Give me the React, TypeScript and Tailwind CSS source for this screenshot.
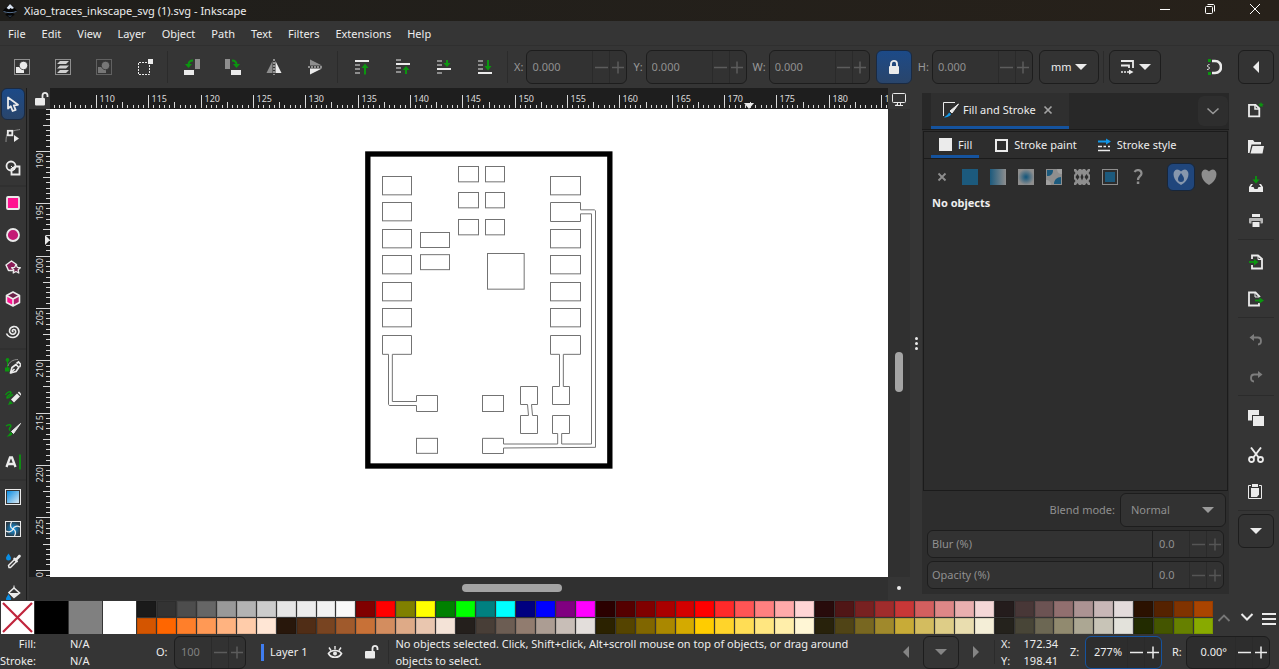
import { useLayoutEffect, useRef, useState } from 'react';
import type { ReactNode } from 'react';

const menus = ['File', 'Edit', 'View', 'Layer', 'Object', 'Path', 'Text', 'Filters', 'Extensions', 'Help'];

const paletteTop = [
  '#1a1a1a', '#333333', '#4d4d4d', '#666666', '#999999', '#b3b3b3', '#cccccc', '#e6e6e6', '#ececec', '#f2f2f2', '#f9f9f9',
  '#800000', '#ff0000', '#808000', '#ffff00', '#008000', '#00ff00', '#008080', '#00ffff', '#000080', '#0000ff', '#800080', '#ff00ff',
  '#2b0000', '#550000', '#800000', '#aa0000', '#d40000', '#ff0000', '#ff2a2a', '#ff5555', '#ff8080', '#ffaaaa', '#ffd5d5',
  '#280b0b', '#501616', '#782121', '#a02c2c', '#c83737', '#d35f5f', '#de8787', '#e9afaf', '#f4d7d7',
  '#241c1c', '#483737', '#6c5353', '#916f6f', '#ac9393', '#c8b7b7', '#e3dbdb',
  '#2b1100', '#552200', '#803300', '#aa4400',
];

const paletteBottom = [
  '#d45500', '#ff6600', '#ff7f2a', '#ff9955', '#ffb380', '#ffccaa', '#ffe6d5',
  '#28170b', '#502d16', '#784421', '#a05a2c', '#c87137', '#d38d5f', '#deaa87', '#e9c6af', '#f4e3d7',
  '#241f1c', '#483e37', '#6c5d53', '#917c6f', '#ac9d93', '#c8beb7', '#e3dedb',
  '#2b2200', '#554400', '#806600', '#aa8800', '#d4aa00', '#ffcc00', '#ffd42a', '#ffdd55', '#ffe680', '#ffeeaa', '#fff6d5',
  '#28220b', '#504416', '#786721', '#a0892c', '#c8ab37', '#d3bc5f', '#decd87', '#e9ddaf', '#f4eed7',
  '#24221c', '#484537', '#6c6753', '#918a6f', '#aca793', '#c8c4b7', '#e3e2db',
  '#222b00', '#445500', '#668000', '#88aa00',
];

const W = '#ebebeb';
const G = '#0b960f';
const DIM = '#8e8e8e';

type Item = { label: string; icon: ReactNode };

function Icon({ children, className = 'size-4' }: { children: ReactNode; className?: string }) {
  return (
    <svg viewBox="0 0 16 16" fill="none" className={`shrink-0 ${className}`} aria-hidden="true">
      {children}
    </svg>
  );
}

function Triangle({ dir, color = W, className = 'size-3' }: { dir: 'down' | 'left' | 'right'; color?: string; className?: string }) {
  const d = dir === 'down' ? 'M0 3H12L6 9Z' : dir === 'left' ? 'M9 0V12L3 6Z' : 'M3 0V12L9 6Z';
  return (
    <svg viewBox="0 0 12 12" className={`pointer-events-none shrink-0 ${className}`} aria-hidden="true">
      <path d={d} fill={color} />
    </svg>
  );
}

/* Top toolbar */

const selectTools: Item[] = [
  {
    label: 'Select all',
    icon: (
      <>
        <rect x=".5" y=".5" width="15" height="15" stroke={W} strokeDasharray="1 1" />
        <rect x="2" y="8" width="8" height="6" fill={W} />
        <circle cx="9.500" cy="6.500" r="4.200" fill={W} stroke="#353535" strokeWidth=".8" />
      </>
    ),
  },
  {
    label: 'Select all in all layers',
    icon: (
      <>
        <rect x=".5" y=".5" width="15" height="15" stroke={W} strokeDasharray="1 1" />
        <path d="M5 2h9l-3 3H2zM5 6.500h9l-3 3H2zM5 11h9l-3 3H2z" fill="#d0d0d0" />
      </>
    ),
  },
  {
    label: 'Deselect',
    icon: (
      <>
        <rect x=".5" y=".5" width="15" height="15" stroke={DIM} strokeDasharray="1 1" />
        <rect x="2" y="8" width="8" height="6" fill="#777" />
        <circle cx="9.500" cy="6.500" r="4.200" fill="#777" stroke="#353535" strokeWidth=".8" />
      </>
    ),
  },
  {
    label: 'Toggle selection box',
    icon: (
      <>
        <path d="M10 3.500H1.500V15M2 15.500H12.500V6" stroke={W} strokeDasharray="2 1" />
        <rect x="11" y="0" width="5" height="5" fill={W} />
      </>
    ),
  },
];

const transformTools: Item[] = [
  {
    label: 'Rotate 90 counter-clockwise',
    icon: (
      <>
        <rect x="11" y="0" width="5" height="10" fill={DIM} />
        <rect x="0" y="11" width="10" height="5" fill={W} />
        <path d="M9 1.500C6 1.500 4.500 3.500 4.500 6" stroke={G} strokeWidth="2" />
        <path d="M1 5h7L4.500 9z" fill={G} />
      </>
    ),
  },
  {
    label: 'Rotate 90 clockwise',
    icon: (
      <>
        <rect x="0" y="0" width="5" height="10" fill={DIM} />
        <rect x="6" y="11" width="10" height="5" fill={W} />
        <path d="M7 1.500C10 1.500 11.500 3.500 11.500 6" stroke={G} strokeWidth="2" />
        <path d="M8 5h7l-3.500 4z" fill={G} />
      </>
    ),
  },
  {
    label: 'Flip horizontal',
    icon: (
      <>
        <path d="M6.500 2V14H0.500z" fill={DIM} />
        <path d="M9.500 2V14H15.500z" fill={W} />
        <path d="M8 0V16" stroke={W} strokeDasharray="2 1" />
      </>
    ),
  },
  {
    label: 'Flip vertical',
    icon: (
      <>
        <path d="M3 0.500V6.500H15z" fill={DIM} />
        <path d="M3 15.500V9.500H15z" fill={W} />
        <path d="M1 8H16" stroke={W} strokeDasharray="2 1" />
      </>
    ),
  },
];

const orderTools: Item[] = [
  {
    label: 'Raise to top',
    icon: (
      <>
        <path d="M1 2H15" stroke={W} strokeWidth="2" />
        <path d="M1 6H6M1 10H6M1 14H6" stroke={DIM} strokeWidth="2" />
        <path d="M11 15.500V8" stroke={G} strokeWidth="2" />
        <path d="M7.500 9L11 4.500L14.500 9z" fill={G} />
      </>
    ),
  },
  {
    label: 'Raise',
    icon: (
      <>
        <path d="M1 5H15" stroke={W} strokeWidth="2" />
        <path d="M1 1H6M1 9H6M1 13H6" stroke={DIM} strokeWidth="2" />
        <path d="M11 15V10" stroke={G} strokeWidth="2" />
        <path d="M7.500 11L11 7L14.500 11z" fill={G} />
      </>
    ),
  },
  {
    label: 'Lower',
    icon: (
      <>
        <path d="M1 10H15" stroke={W} strokeWidth="2" />
        <path d="M1 2H6M1 6H6M1 14H6" stroke={DIM} strokeWidth="2" />
        <path d="M11 1V5" stroke={G} strokeWidth="2" />
        <path d="M7.500 4L11 8L14.500 4z" fill={G} />
      </>
    ),
  },
  {
    label: 'Lower to bottom',
    icon: (
      <>
        <path d="M1 14H15" stroke={W} strokeWidth="2" />
        <path d="M1 2H6M1 6H6M1 10H6" stroke={DIM} strokeWidth="2" />
        <path d="M11 1V8" stroke={G} strokeWidth="2" />
        <path d="M7.500 7L11 11.500L14.500 7z" fill={G} />
      </>
    ),
  },
];

/* Toolbox */

const toolGroups: Item[][] = [
  [
    { label: 'Selector', icon: <path d="M3 1.500V12.500L5.800 10.200L7.600 15L10.600 13.800L8.800 9.300L13 8.800Z" stroke={W} strokeWidth="1.800" strokeLinejoin="round" /> },
    {
      label: 'Node editor',
      icon: (
        <>
          <path d="M1 14C1 8 2 5 4 4M8 3C11 2 13 2 15 1.500" stroke={DIM} />
          <rect x="2.800" y="2.800" width="4.500" height="4.500" stroke={W} strokeWidth="1.800" />
          <path d="M9 7v7l5-3.500z" fill={W} />
        </>
      ),
    },
    {
      label: 'Shape builder',
      icon: (
        <>
          <circle cx="6" cy="6" r="4.500" stroke={W} strokeWidth="1.800" />
          <path d="M6.500 11.500V14.500H14.500V6.500H10.500L6.500 9Z" stroke={W} strokeWidth="1.800" />
          <path d="M6 6l4 4" stroke={W} />
        </>
      ),
    },
  ],
  [
    { label: 'Rectangle', icon: <rect x="2" y="2" width="12" height="12" rx="1" fill="#ff1391" stroke={W} strokeWidth="1.800" /> },
    { label: 'Ellipse', icon: <circle cx="8" cy="8" r="6" fill="#c41a75" stroke={W} strokeWidth="1.800" /> },
    {
      label: 'Star and polygon',
      icon: (
        <>
          <path d="M6.500 2L11.500 5.500L9.500 11.500H3.500L1 6Z" fill="#8d1b58" stroke={W} strokeWidth="1.500" strokeLinejoin="round" />
          <path d="M11 5.500L12.300 8.300L15.300 8.700L13.200 10.800L13.800 14L11 12.500L8.200 14L8.800 10.800L6.700 8.700L9.700 8.300Z" fill="#6b2148" stroke={W} strokeWidth="1.300" strokeLinejoin="round" />
        </>
      ),
    },
    {
      label: '3D box',
      icon: (
        <>
          <path d="M8 1L14.500 4.500V11.500L8 15L1.500 11.500V4.500Z" fill="#6b2148" />
          <path d="M1.500 4.500L8 8V15L1.500 11.500Z" fill="#ff1391" />
          <path d="M8 8L14.500 4.500V11.500L8 15Z" fill="#b01c6b" />
          <path d="M8 1L14.500 4.500V11.500L8 15L1.500 11.500V4.500ZM1.500 4.500L8 8L14.500 4.500M8 8V15" stroke={W} strokeWidth="1.600" strokeLinejoin="round" />
        </>
      ),
    },
    {
      label: 'Spiral',
      icon: <path d="M8.500 8.500C7 8.800 6.800 6.800 8.500 6.500C11 6.200 11.500 9.500 9.500 10.700C6.500 12.300 3.800 9.500 4.600 6.700C5.800 3 11 2.500 13 5.500C15.500 9.500 12.500 14.300 8 14.500C5 14.500 2.500 12.800 1.500 10.500" stroke={W} strokeWidth="1.600" />,
    },
  ],
  [
    {
      label: 'Pen',
      icon: (
        <>
          <path d="M2.500 12V3" stroke={G} />
          <circle cx="2.500" cy="2" r="1.900" fill={G} />
          <rect x="0" y="9.500" width="4.500" height="4" fill={G} />
          <path d="M3 8C4 4 8 1.500 13 1.500" stroke={DIM} />
          <path d="M5.500 15L7 9.500L11 6.500L13.800 9.500L11 13.500Z" stroke={W} strokeWidth="1.700" strokeLinejoin="round" />
          <path d="M5.500 15L9.500 11M11.500 5.500L13.500 4L16 6.800L14.500 9" stroke={W} strokeWidth="1.700" />
        </>
      ),
    },
    {
      label: 'Pencil',
      icon: (
        <>
          <path d="M0.500 5C2 2 5 1 6 2.500C6.500 5 1 5.500 2 8C4 8.500 6 5 8 4.500" stroke={G} strokeWidth="1.400" />
          <path d="M6 9.500L12 3.500L15 6.500L9 12.500Z" fill={W} />
          <path d="M12.800 2.700L14 1.500L16 3.500V5.700Z" fill={W} />
          <path d="M5 10.500L8 13.500L3 15Z" fill={G} />
        </>
      ),
    },
    {
      label: 'Calligraphy',
      icon: (
        <>
          <path d="M1 4C4 1.500 7 3 5.500 5C4 6.500 4 8 5.500 8.500" stroke={G} strokeWidth="1.500" />
          <path d="M1.500 14.500C4 15 7 13.500 7.500 11.500L5.500 10C4 12 3 13.500 1.500 14.500Z" fill={G} />
          <path d="M15.500 1.500L6.500 9.500L8.500 11.500Z" fill={W} stroke={W} />
        </>
      ),
    },
    {
      label: 'Text',
      icon: (
        <>
          <path d="M1.500 13L5 3.500H7L10.500 13M3.500 10H8.500" stroke={W} strokeWidth="2.300" />
          <path d="M15 0.500V15.500" stroke={G} strokeWidth="1.800" />
        </>
      ),
    },
  ],
  [
    {
      label: 'Gradient',
      icon: (
        <>
          <defs>
            <linearGradient id="tool-gradient" x1="0" y1="0" x2="1" y2="1">
              <stop offset="0" stopColor="#0a8ee4" />
              <stop offset=".9" stopColor="#c5dff0" />
            </linearGradient>
          </defs>
          <rect x=".5" y=".5" width="15" height="15" stroke={W} />
          <rect x="2" y="2" width="12" height="12" fill="url(#tool-gradient)" />
        </>
      ),
    },
    {
      label: 'Mesh gradient',
      icon: (
        <>
          <defs>
            <radialGradient id="tool-mesh">
              <stop offset="0" stopColor="#0a9cf5" />
              <stop offset="1" stopColor="#2b3d49" />
            </radialGradient>
          </defs>
          <rect x=".5" y=".5" width="15" height="15" stroke={W} fill="url(#tool-mesh)" />
          <path d="M8 8C5 7 5 3.500 6.500 1M8 8C9 5 12.500 4.500 15 6M8 8C11 9 11 12.500 9.500 15M8 8C7 11 3.500 11.500 1 10" stroke={W} strokeWidth="1.300" />
        </>
      ),
    },
    {
      label: 'Dropper',
      icon: (
        <>
          <path d="M3.500 0.500C5 3 6 4 6 5.300A2.500 2.300 0 0 1 1 5.300C1 4 2 3 3.500 0.500Z" fill="#0a8ee4" />
          <path d="M4 14.500L3.500 12.500L9.500 6.500L11.500 8.500L5.500 14.500Z" stroke={W} strokeWidth="1.400" />
          <path d="M9 4.500L11 5L13.500 2C15 1 16.500 2.500 15.500 4L12.500 7L13 9L11.500 9.500L8 6Z" fill={W} />
        </>
      ),
    },
    {
      label: 'Paint bucket',
      icon: (
        <>
          <path d="M9 3L14.500 8L9 12.500L4 7.500Z" stroke={W} strokeWidth="1.600" />
          <path d="M3.500 8H14L9 12.500Z" fill={W} />
          <path d="M9 0.500V4" stroke={W} />
          <path d="M3.500 9C5 11.500 6 12.500 6 14A2.500 2 0 0 1 1 14C1 12.500 2 11.500 3.500 9Z" fill="#0a8ee4" />
        </>
      ),
    },
  ],
];

/* Commands bar */

const commandGroups: Item[][] = [
  [
    {
      label: 'New document',
      icon: (
        <>
          <path d="M1 2.800H7.500L11.300 6.500V14.300H1Z" stroke={W} strokeWidth="1.800" />
          <path d="M7 2.500V7H11.500" stroke={W} strokeWidth="1.500" />
          <path d="M13 0L13.800 1.700L15.800 1.900L14.400 3.200L14.800 5L13 4.200L11.200 5L11.600 3.200L10.200 1.900L12.200 1.700Z" fill={G} />
        </>
      ),
    },
    {
      label: 'Open',
      icon: (
        <>
          <path d="M0 14V1H5L6.500 3H13V5.500H3.500L1.500 14Z" fill={W} />
          <path d="M4.500 7H16L14.500 14.500H2.500Z" fill={W} />
        </>
      ),
    },
    {
      label: 'Save',
      icon: (
        <>
          <path d="M8 0V4" stroke={G} strokeWidth="1.800" />
          <path d="M4.500 3.500H11.500L8 7.500Z" fill={G} />
          <path d="M3 8H5L3 11H5.500L6.500 13H9.500L10.500 11H13L11 8H13L15 11V16H1V11Z" fill={W} />
        </>
      ),
    },
    {
      label: 'Print',
      icon: (
        <>
          <rect x="4" y="1" width="8" height="3" fill={W} />
          <rect x="1" y="5" width="14" height="5.500" rx="1" fill="#b5b5b5" />
          <rect x="4" y="8.500" width="8" height="6" fill={W} stroke="#353535" />
        </>
      ),
    },
  ],
  [
    {
      label: 'Import',
      icon: (
        <>
          <path d="M4 5V1.500H10L14 5V14.500H4V11" stroke={W} strokeWidth="1.800" />
          <path d="M10 1V5.500H14" stroke={W} />
          <path d="M1 8H7" stroke={G} strokeWidth="1.800" />
          <path d="M6 5L10.500 8L6 11.500Z" fill={G} />
        </>
      ),
    },
    {
      label: 'Export',
      icon: (
        <>
          <path d="M11 12V14.500H1V1.500H7.500L11.500 5.500V6" stroke={W} strokeWidth="1.800" />
          <path d="M7 1V6H11.500" stroke={W} />
          <path d="M7 9.500H13" stroke={G} strokeWidth="1.800" />
          <path d="M11.500 6.500L16 9.500L11.500 12.500Z" fill={G} />
        </>
      ),
    },
  ],
  [
    {
      label: 'Undo',
      icon: (
        <>
          <path d="M6 2V9L1.500 5.500Z" fill="#7d7d7d" />
          <path d="M5 5.500H10C14 5.500 14 12.500 10 12.500" stroke="#7d7d7d" strokeWidth="1.800" />
        </>
      ),
    },
    {
      label: 'Redo',
      icon: (
        <>
          <path d="M10 2V9L14.500 5.500Z" fill="#7d7d7d" />
          <path d="M11 5.500H6C2 5.500 2 12.500 6 12.500" stroke="#7d7d7d" strokeWidth="1.800" />
        </>
      ),
    },
  ],
  [
    {
      label: 'Duplicate',
      icon: (
        <>
          <rect x="0" y="0" width="11" height="10.500" fill={W} />
          <rect x="4.500" y="5.500" width="12" height="11" fill={W} stroke="#353535" />
        </>
      ),
    },
    {
      label: 'Cut',
      icon: (
        <>
          <path d="M3 0.500L11 11M13 0.500L5 11" stroke={W} strokeWidth="1.900" />
          <circle cx="3.500" cy="12.500" r="2.500" stroke={W} strokeWidth="1.800" />
          <circle cx="12.500" cy="12.500" r="2.500" stroke={W} strokeWidth="1.800" />
        </>
      ),
    },
    {
      label: 'Paste',
      icon: (
        <>
          <path d="M3 1.500H0.500V14.500H13.500V1.500H11" stroke={W} />
          <path d="M4 3V0H10V3Z" fill={W} />
          <path d="M3 4H11V10.500L9 13H3Z" fill={W} />
        </>
      ),
    },
  ],
];

function ToolbarGroup({ items }: { items: Item[] }) {
  return (
    <div className="flex">
      {items.map((item) => (
        <button key={item.label} aria-label={item.label} className="flex h-8 w-[41px] items-center justify-center">
          <Icon>{item.icon}</Icon>
        </button>
      ))}
    </div>
  );
}

function VSep() {
  return <div className="mr-[3px] ml-0.5 h-8 w-px shrink-0 bg-[#2b2b2b]" />;
}

function StepButtons({ color }: { color: string }) {
  return (
    <>
      <button aria-label="Decrease" className="flex w-[17px] shrink-0 items-center justify-center border-l border-[#2a2a2a]">
        <svg viewBox="0 0 13 13" className="size-[13px]" aria-hidden="true">
          <path d="M0 6.500H13" stroke={color} strokeWidth="1.500" />
        </svg>
      </button>
      <button aria-label="Increase" className="flex w-[17px] shrink-0 items-center justify-center border-l border-[#2a2a2a]">
        <svg viewBox="0 0 13 13" className="size-[13px]" aria-hidden="true">
          <path d="M0 6.500H12M6 0.500V12.500" stroke={color} strokeWidth="1.500" />
        </svg>
      </button>
    </>
  );
}

function ToolbarSpin({ id, label }: { id: string; label: string }) {
  return (
    <div className="flex items-center gap-[3px]">
      <label htmlFor={id} className="text-[#999]">{label}</label>
      <div className="flex h-[34px] w-[101px] overflow-hidden rounded-md border border-[#1d1d1d] bg-[#323232]">
        <input id={id} defaultValue="0.000" className="min-w-0 flex-1 bg-transparent pl-[5px] text-[#909090] outline-none" />
        <StepButtons color="#5c5c5c" />
      </div>
    </div>
  );
}

function PanelSpin({ id, label }: { id: string; label: string }) {
  return (
    <div className="flex h-7 overflow-hidden rounded-md border border-[#1d1d1d] bg-[#323232] text-[#909090]">
      <label htmlFor={id} className="flex flex-1 items-center border-r border-[#1d1d1d] pl-1">{label}</label>
      <input id={id} defaultValue="0.0" className="w-9 bg-transparent pl-1.5 outline-none" />
      <StepButtons color="#555555" />
    </div>
  );
}

/* Rulers: one division is half a millimetre */

const PX_PER_MM = 10.47;

function ticks(first: number, firstAt: number, length: number) {
  const list = [];
  for (let v = first; firstAt + (v - first) * PX_PER_MM < length; v += 0.5) {
    list.push({ value: v, at: Math.round(firstAt + (v - first) * PX_PER_MM) + 0.5, major: v % 5 === 0, mid: v % 5 === 2.5 });
  }
  return list;
}

function useSize() {
  const ref = useRef<HTMLDivElement>(null);
  const [size, setSize] = useState({ width: 0, height: 0 });
  useLayoutEffect(() => {
    const el = ref.current;
    if (!el) return;
    const measure = () => setSize({ width: el.clientWidth, height: el.clientHeight });
    measure();
    const observer = new ResizeObserver(measure);
    observer.observe(el);
    return () => observer.disconnect();
  }, []);
  return { ref, ...size };
}

function HorizontalRuler() {
  const { ref, width } = useSize();
  return (
    <div ref={ref} className="min-w-0 overflow-hidden bg-[#1e1e1e]">
      <svg className="h-full w-full text-[9px]" aria-hidden="true">
        {ticks(106, 4, width).map((t) => (
          <g key={t.value}>
            <path d={`M${t.at} ${t.major ? 7 : t.mid ? 14 : 17}V20`} stroke="#d8d8d8" />
            {t.major && <text x={t.at + 3} y="14" fill="#dcdcdc">{t.value}</text>}
          </g>
        ))}
        <path d="M694 15H704L699 21Z" fill={W} />
      </svg>
    </div>
  );
}

function VerticalRuler() {
  const { ref, height } = useSize();
  return (
    <div ref={ref} className="min-h-0 overflow-hidden bg-[#1e1e1e]">
      <svg className="h-full w-full text-[9px]" aria-hidden="true">
        {ticks(186, 0, height).map((t) => (
          <g key={t.value}>
            <path d={`M${t.major ? 7 : t.mid ? 14 : 17} ${t.at}H21`} stroke="#d8d8d8" />
            {t.major && (
              <text transform={`translate(14 ${t.at + 17}) rotate(-90)`} fill="#dcdcdc">{t.value}</text>
            )}
          </g>
        ))}
        <path d="M16 126V136L21 131Z" fill={W} />
      </svg>
    </div>
  );
}

/* Board drawing, three units to a screen pixel */

const padRows = [94.5, 172.5, 253.5, 331.5, 412.5, 490.5];

function Board() {
  return (
    <svg viewBox="0 0 780 990" className="absolute top-9 left-[310px] h-[330px] w-[260px]" role="img" aria-label="Circuit board traces">
      <rect x="23.500" y="27" width="726" height="936" fill="#fff" stroke="#000" strokeWidth="16" />
      <g fill="none" stroke="#737373" strokeWidth="3">
        {padRows.map((y) => (
          <rect key={y} x="67.500" y={y} width="87" height="55" />
        ))}
        {padRows.filter((_, i) => i !== 1).map((y) => (
          <rect key={y} x="571.500" y={y} width="90" height="55" />
        ))}
        {[64.5, 142.5, 223.5].map((y) => (
          <g key={y}>
            <rect x="295.500" y={y} width="60" height="46" />
            <rect x="376.500" y={y} width="57" height="46" />
          </g>
        ))}
        <rect x="181.500" y="262.500" width="87" height="45" />
        <rect x="181.500" y="329" width="87" height="45" />
        <rect x="382.500" y="325.500" width="110" height="107" />
        <rect x="367.500" y="751.500" width="63" height="48" />
        <rect x="169.500" y="880" width="63" height="45" />
        <path d="M85.500 628H67.500V571.500H154.500V628H97V769.500H169.500V751.500H232.500V799.500H169.500V781.500H88L85.500 778Z" />
        <path d="M598.500 628H571.500V571.500H661.500V628H610V724.500H628.500V778.500H577.500V724.500H598.500Z" />
        <path d="M505.500 811.500H481.500V865.500H532.500V811.500H517.500L514.500 778.500H532.500V724.500H481.500V778.500H502.500Z" />
        <path d="M661.500 194.500V172.500H571.500V229.500H661.500V206.500H694.500V897H605V865.500H628.500V811.500H577.500V865.500H593V897H430.500V880H367.500V925.500H430.500V909L706.500 907V197L703 194.500Z" />
      </g>
    </svg>
  );
}

function DrawingArea() {
  return (
    <section className="grid min-w-0 flex-1 grid-cols-[21px_1fr_22px] grid-rows-[21px_1fr_23px] bg-[#303030]">
      <button aria-label="Lock guides" className="flex items-center justify-center bg-[#353535] pl-1">
        <OpenLock />
      </button>
      <HorizontalRuler />
      <button aria-label="Display mode" className="flex items-center justify-center bg-[#353535]">
        <Icon>
          <rect x="1.500" y="2.500" width="13" height="9" rx="1" stroke={W} />
          <path d="M6.500 12V14H4.500M4 14.500H12M9.500 12V14" stroke={W} />
        </Icon>
      </button>
      <VerticalRuler />
      <div className="relative min-h-0 overflow-hidden bg-white">
        <Board />
      </div>
      <div className="flex justify-center pt-[243px]">
        <div className="h-10 w-2 rounded-full bg-[#a4a4a4]" />
      </div>
      <div />
      <div className="flex items-center pb-px pl-[412px]">
        <div className="h-2 w-[100px] rounded-full bg-[#a4a4a4]" />
      </div>
      <div className="flex items-center justify-center bg-[#353535] pb-px">
        <div className="size-1 rounded-full bg-[#ebebeb]" />
      </div>
    </section>
  );
}

function OpenLock() {
  return (
    <Icon>
      <rect x="1" y="7" width="10" height="7.500" rx="1" fill={W} />
      <path d="M8.500 8V4.500C8.500 1 13.500 1 13.500 4.500V6" stroke={W} strokeWidth="1.800" />
    </Icon>
  );
}

/* Fill and Stroke dialog */

const paintKinds: Item[] = [
  { label: 'No paint', icon: <path d="M4.500 4.500L11.500 11.500M11.500 4.500L4.500 11.500" stroke={DIM} strokeWidth="1.800" /> },
  { label: 'Flat color', icon: <rect width="16" height="16" fill="#1c5a7d" /> },
  { label: 'Linear gradient', icon: <rect width="16" height="16" fill="url(#paint-linear)" /> },
  { label: 'Radial gradient', icon: <rect width="16" height="16" fill="url(#paint-radial)" /> },
  {
    label: 'Mesh gradient',
    icon: (
      <>
        <rect width="16" height="16" fill={DIM} />
        <path d="M1 1H7C7 5 5 7 1 7ZM15 15H8C8 11 11 8 15 8Z" fill="#1c5a7d" />
        <path d="M11 0H16V5C13 5 11 3 11 0ZM0 11C3 11 5 13 5 16H0Z" fill="#a0a0a0" />
      </>
    ),
  },
  {
    label: 'Pattern',
    icon: (
      <path
        d="M0 0H2L3.500 2L5 0H7L8 1L9 0H11L12.500 2L14 0H16V2L14.500 4L16 6V10L14.500 12L16 14V16H14L12.500 14L11 16H9L8 15L7 16H5L3.500 14L2 16H0V14L1.500 12L0 10V6L1.500 4L0 2ZM3.500 5L1.500 8L3.500 11L5.500 8ZM8 4.500L6.500 8L8 11.500L9.500 8ZM12.500 5L10.500 8L12.500 11L14.500 8Z"
        fill={DIM}
        fillRule="evenodd"
      />
    ),
  },
  {
    label: 'Swatch',
    icon: (
      <>
        <rect x=".5" y=".5" width="15" height="15" stroke={DIM} />
        <rect x="3" y="3" width="10" height="10" fill="#1c5a7d" />
      </>
    ),
  },
  {
    label: 'Unset paint',
    icon: (
      <>
        <path d="M4.500 3C6.500 0 11.500 0.500 11.500 4.500C11.500 7 8 7.500 8 11" stroke={DIM} strokeWidth="2.200" />
        <rect x="6.800" y="12.500" width="2.500" height="2.500" fill={DIM} />
      </>
    ),
  },
];

function FillAndStroke() {
  return (
    <aside className="mt-[5px] mb-1.5 flex w-[307px] shrink-0 flex-col bg-[#2d2d2d]">
      <svg className="absolute size-0" aria-hidden="true">
        <linearGradient id="paint-linear">
          <stop offset="0" stopColor="#1c5a7d" />
          <stop offset="1" stopColor="#8e8e8e" />
        </linearGradient>
        <radialGradient id="paint-radial">
          <stop offset=".1" stopColor="#1c5a7d" />
          <stop offset="1" stopColor="#8e8e8e" />
        </radialGradient>
      </svg>
      <header className="flex h-[37px] items-stretch border-b border-[#1b1b1b] bg-[#282828] pr-px pl-[9px]">
        <div className="flex w-[138px] items-center border-b-3 border-[#15539e] bg-[#2f2f2f] pl-3">
          <Icon>
            <path d="M12 0.500H0.500V14" stroke={W} />
            <path d="M15.500 2L7 9L9 11Z" fill={W} stroke={W} />
            <path d="M1 15.500C4 15.500 7.500 14 8 12L6 10.500C5 12.500 3 14 1 15.500Z" fill="#1197e8" />
          </Icon>
          <span className="ml-1">Fill and Stroke</span>
          <button aria-label="Close Fill and Stroke" className="ml-1">
            <Icon>
              <path d="M4.500 4.500L11.500 11.500M11.500 4.500L4.500 11.500" stroke="#a2a2a2" strokeWidth="1.700" />
            </Icon>
          </button>
        </div>
        <button aria-label="Dialog menu" className="my-[3px] ml-auto flex w-[30px] items-center justify-center rounded-md bg-[#2e2e2e]">
          <Icon>
            <path d="M2.500 5.500L8 10.500L13.500 5.500" stroke="#999" strokeWidth="1.600" />
          </Icon>
        </button>
      </header>
      <div className="mx-px mt-px flex flex-1 flex-col border border-[#1b1b1b]">
        <div role="tablist" className="flex h-[27px] items-stretch gap-3 border-b border-[#1b1b1b] pl-[7px]">
          <button role="tab" aria-selected="true" className="flex items-center border-b-3 border-[#15539e] pt-0.5 pr-[7px] pl-2">
            <span className="mr-1.5 size-[13px] bg-[#ebebeb]" />
            Fill
          </button>
          <button role="tab" aria-selected="false" className="flex items-center pl-1">
            <span className="mr-1.5 size-[13px] border-2 border-[#ebebeb]" />
            Stroke paint
          </button>
          <button role="tab" aria-selected="false" className="flex items-center pl-2">
            <Icon className="mr-1 size-4">
              <path d="M1 4.500H10" stroke="#1197e8" strokeWidth="2" />
              <path d="M9 1.500L14 4.500L9 7.500Z" fill="#1197e8" />
              <path d="M1 9.500H5M6.500 9.500H9M11 9.500H13M1 13.500H13" stroke={W} strokeWidth="1.500" />
            </Icon>
            Stroke style
          </button>
        </div>
        <div className="flex items-center pt-1 pl-1">
          {paintKinds.map((kind) => (
            <button key={kind.label} aria-label={kind.label} className="flex size-7 shrink-0 items-center justify-center">
              <Icon>{kind.icon}</Icon>
            </button>
          ))}
          <button aria-label="Fill rule even-odd" className="ml-[15px] flex size-7 shrink-0 items-center justify-center rounded-md border border-[#17263a] bg-[#20467c]">
            <Icon>
              <path d="M4 0.500C6 0.500 7 1.500 8 2.500C9 1.500 10 0.500 12 0.500C17 1.500 16.500 9 11 14L8 16L5 14C-0.500 9 -1 1.500 4 0.500ZM8 4C6 7 5 8 5 10A3 3 0 0 0 11 10C11 8 10 7 8 4Z" fill="#8797ad" fillRule="evenodd" />
            </Icon>
          </button>
          <button aria-label="Fill rule nonzero" className="flex size-7 shrink-0 items-center justify-center">
            <Icon>
              <path d="M4 0.500C6 0.500 7 1.500 8 2.500C9 1.500 10 0.500 12 0.500C17 1.500 16.500 9 11 14L8 16L5 14C-0.500 9 -1 1.500 4 0.500Z" fill={DIM} />
            </Icon>
          </button>
        </div>
        <p className="pt-1 pl-2 font-bold">No objects</p>
      </div>
      <div className="flex flex-col gap-[3px] px-[5px] pt-0.5 pb-[5px]">
        <div className="-mr-0.5 flex items-center justify-end gap-[5px] text-[#909090]">
          <label htmlFor="blend-mode">Blend mode:</label>
          <div className="relative">
            <select id="blend-mode" className="h-[34px] w-[106px] appearance-none rounded-md border border-[#1d1d1d] bg-[#323232] pl-2.5">
              <option>Normal</option>
            </select>
            <Triangle dir="down" color="#9a9a9a" className="absolute top-[11px] right-3 size-3" />
          </div>
        </div>
        <PanelSpin id="blur" label="Blur (%)" />
        <PanelSpin id="opacity" label="Opacity (%)" />
      </div>
    </aside>
  );
}

function StatusBar() {
  return (
    <footer className="flex h-[34px] items-center overflow-hidden">
      <dl className="grid w-[150px] shrink-0 grid-cols-[36px_1fr] gap-x-[34px] leading-[17px]">
        <dt className="text-right">Fill:</dt>
        <dd>N/A</dd>
        <dt className="text-right">Stroke:</dt>
        <dd>N/A</dd>
      </dl>
      <label htmlFor="object-opacity" className="ml-1.5 w-[18px]">O:</label>
      <div className="flex h-[33px] w-[72px] shrink-0 overflow-hidden rounded-md border border-[#1d1d1d] bg-[#323232]">
        <input id="object-opacity" defaultValue="100" className="min-w-0 flex-1 bg-transparent pl-1.5 text-[#808080] outline-none" />
        <StepButtons color="#5c5c5c" />
      </div>
      <button className="ml-[15px] flex h-[17px] shrink-0 items-center border-l-3 border-[#3f7df0] pl-1.5">Layer 1</button>
      <button aria-label="Toggle layer visibility" className="ml-5">
        <Icon>
          <path d="M1.500 9.500C4 5.500 12 5.500 14.500 9.500C12 14.500 4 14.500 1.500 9.500Z" stroke={W} strokeWidth="1.700" />
          <circle cx="8" cy="9.500" r="2" fill={W} />
          <path d="M2 3.500L4 6.500M8 2V5.500M14 3.500L12 6.500" stroke={W} strokeWidth="1.400" />
        </Icon>
      </button>
      <button aria-label="Lock layer" className="ml-[21px]">
        <OpenLock />
      </button>
      <div className="ml-2 h-6 w-px bg-[#2b2b2b]" />
      <p className="ml-1.5 min-w-0 flex-1 leading-[17px]">
        No objects selected. Click, Shift+click, Alt+scroll mouse on top of objects, or drag around objects to select.
      </p>
      <button aria-label="Previous page" className="ml-6">
        <Triangle dir="left" color="#858585" />
      </button>
      <button aria-label="Pages" className="mx-[11px] flex h-[33px] w-9 shrink-0 items-center justify-center rounded-md border border-[#1d1d1d]">
        <Triangle dir="down" color="#858585" />
      </button>
      <button aria-label="Next page">
        <Triangle dir="right" color="#858585" />
      </button>
      <div className="ml-3 h-6 w-px bg-[#2b2b2b]" />
      <dl className="ml-1.5 grid w-[57px] shrink-0 grid-cols-[1fr_auto] leading-[17px]">
        <dt>X:</dt>
        <dd>172.34</dd>
        <dt>Y:</dt>
        <dd>198.41</dd>
      </dl>
      <label htmlFor="zoom-level" className="ml-3 w-[15px]">Z:</label>
      <div className="flex h-[33px] w-[77px] shrink-0 overflow-hidden rounded-md border border-[#15539e] bg-[#2d2d2d]">
        <input id="zoom-level" defaultValue="277%" className="min-w-0 flex-1 bg-transparent pl-2 outline-none" />
        <StepButtons color={W} />
      </div>
      <label htmlFor="rotation" className="ml-2.5 w-[14px]">R:</label>
      <div className="mr-[9px] flex h-[33px] w-[84px] shrink-0 overflow-hidden rounded-md border border-[#1d1d1d] bg-[#2d2d2d]">
        <input id="rotation" defaultValue="0.00°" className="min-w-0 flex-1 bg-transparent pr-2 text-right outline-none" />
        <StepButtons color={W} />
      </div>
    </footer>
  );
}

function Palette() {
  return (
    <div className="flex h-[35px] shrink-0 items-stretch pt-px pl-px">
      <div className="flex gap-px pr-px pb-px">
        <button aria-label="No color" className="w-[33px] bg-white">
          <svg viewBox="0 0 33 33" className="w-full" aria-hidden="true">
            <path d="M2 2L31 31M31 2L2 31" stroke="#c0243c" strokeWidth="2.200" />
          </svg>
        </button>
        <button aria-label="Black" className="w-[33px] bg-black" />
        <button aria-label="50% gray" className="w-[33px] bg-[#808080]" />
        <button aria-label="White" className="w-[33px] bg-white" />
      </div>
      <div className="grid flex-1 grid-cols-[repeat(54,minmax(0,1fr))] gap-px pb-px">
        {[...paletteTop, ...paletteBottom].map((color, i) => (
          <button key={i} aria-label={color} className="border border-black/10" style={{ backgroundColor: color }} />
        ))}
      </div>
      <div className="flex w-[66px] items-center justify-between pr-[3px] pl-1">
        <button aria-label="Scroll palette up">
          <svg viewBox="0 0 14 14" className="size-3.5" fill="none" aria-hidden="true">
            <path d="M1.500 10L7 4.500L12.500 10" stroke="#777" strokeWidth="1.800" />
          </svg>
        </button>
        <button aria-label="Scroll palette down">
          <svg viewBox="0 0 14 14" className="size-3.5" fill="none" aria-hidden="true">
            <path d="M1.500 3L7 8.500L12.500 3" stroke={W} strokeWidth="2" />
          </svg>
        </button>
        <button aria-label="Palette menu">
          <svg viewBox="0 0 14 14" className="size-3.5" fill="none" aria-hidden="true">
            <path d="M0 3H14M0 8H14M0 13H14" stroke={W} strokeWidth="1.800" />
          </svg>
        </button>
      </div>
    </div>
  );
}

export default function App() {
  return (
    <div className="flex h-screen flex-col overflow-hidden bg-[#353535] font-['Noto_Sans','Open_Sans',sans-serif] text-[11px] leading-4 text-[#ededed]">
      {/* Title bar */}
      <div className="flex h-[21px] shrink-0 items-center bg-gradient-to-r from-[#1f1e1b] to-[#27211a] pl-0.5">
        <svg viewBox="0 0 16 16" className="size-4" aria-hidden="true">
          <path d="M8 0.500L15 7.500C16 9 12 9.500 11 10C11 11 13 11 12.500 12C11 13 10 13 8 15.500C6 13 4.500 13 3.500 12C3 11 5 11 5 10C3 9.500 0 9 1 7.500Z" fill="#050505" />
          <path d="M8 1L12 5L10 6L8.500 5L7 6.500L4.500 5Z" fill="#d7e2ef" />
          <path d="M1.500 8.500C5 10 11 10 14.500 8.500" stroke="#58718f" fill="none" />
          <path d="M5.500 12.500H10.500L8 14.500Z" fill="#2b3848" />
        </svg>
        <h1 className="ml-1.5 text-[11px]">Xiao_traces_inkscape_svg (1).svg - Inkscape</h1>
        <div className="ml-auto flex gap-[33px] pr-[18px] pb-1">
          <button aria-label="Minimize">
            <svg viewBox="0 0 12 12" className="size-3" fill="none" aria-hidden="true"><path d="M1 6.500H11" stroke="#fff" /></svg>
          </button>
          <button aria-label="Restore">
            <svg viewBox="0 0 12 12" className="size-3" fill="none" aria-hidden="true">
              <rect x="1.500" y="3.500" width="7" height="7" rx="1" stroke="#fff" />
              <path d="M3.500 1.500H9C10 1.500 10.500 2 10.500 3V8.500" stroke="#fff" />
            </svg>
          </button>
          <button aria-label="Close">
            <svg viewBox="0 0 12 12" className="size-3" fill="none" aria-hidden="true"><path d="M1 1L11 11M11 1L1 11" stroke="#fff" /></svg>
          </button>
        </div>
      </div>

      {/* Menu bar */}
      <nav className="flex h-[25px] shrink-0 items-center border-b border-[#2f2f2f] pt-px">
        {menus.map((menu) => (
          <button key={menu} className="px-2">{menu}</button>
        ))}
      </nav>

      {/* Tool controls */}
      <div className="flex h-[42px] shrink-0 items-center pl-px">
        <ToolbarGroup items={selectTools} />
        <VSep />
        <ToolbarGroup items={transformTools} />
        <VSep />
        <ToolbarGroup items={orderTools} />
        <VSep />
        <div className="flex items-center gap-1.5 pl-[3px]">
          <ToolbarSpin id="pos-x" label="X:" />
          <ToolbarSpin id="pos-y" label="Y:" />
          <ToolbarSpin id="size-w" label="W:" />
          <button aria-label="Lock width and height" className="flex h-[34px] w-9 items-center justify-center rounded-md border border-[#1a2a42] bg-gradient-to-b from-[#1c4a88] to-[#29456b]">
            <Icon>
              <rect x="3" y="7" width="10" height="8" rx="1" fill={W} />
              <path d="M5 8V5C5 0.800 11 0.800 11 5V8" stroke={W} strokeWidth="1.900" />
            </Icon>
          </button>
          <ToolbarSpin id="size-h" label="H:" />
          <div className="relative">
            <select aria-label="Units" className="h-[34px] w-[60px] appearance-none rounded-md border border-[#1d1d1d] bg-[#333] pl-[11px]">
              <option>mm</option>
            </select>
            <Triangle dir="down" className="absolute top-[11px] right-3 size-3" />
          </div>
        </div>
        <div className="ml-1 h-8 w-px bg-[#2b2b2b]" />
        <button aria-label="Transform options" className="ml-[5px] flex h-[34px] w-[52px] items-center justify-center gap-1 rounded-md border border-[#1d1d1d] bg-[#333]">
          <Icon>
            <path d="M2 2H14V9M2 6.500H10V9" stroke={W} strokeWidth="1.800" />
            <path d="M2 13H4M5 13H7M8 13H10" stroke={W} strokeWidth="1.500" />
            <path d="M10 10.500L14.500 13L10 15.500Z" fill={W} />
          </Icon>
          <Triangle dir="down" />
        </button>
        <button aria-label="Snapping" className="mr-4 ml-auto">
          <Icon>
            <path d="M6 2H9C17 2 17 14 9 14H6" stroke={W} strokeWidth="2.600" />
            <rect x="2" y="0" width="3" height="3" fill={G} />
            <rect x="2" y="13" width="3" height="3" fill={G} />
            <path d="M3.500 5.500C1 5.500 1 8 2.500 8C4 8 4 10.500 1 10.500" stroke={W} />
          </Icon>
        </button>
        <button aria-label="Show snap options" className="mr-[5px] flex h-[34px] w-9 items-center justify-center rounded-md border border-[#1d1d1d] bg-[#333]">
          <Triangle dir="left" />
        </button>
      </div>

      <main className="flex min-h-0 flex-1">
        {/* Toolbox */}
        <div className="mr-0.5 w-[27px] shrink-0 overflow-hidden border-r border-[#1b1b1b]">
          {toolGroups.map((group, g) => (
            <div key={g} className={g > 0 ? 'mt-px border-t-2 border-[#303030]' : ''}>
              {group.map((tool, i) => (
                <button
                  key={tool.label}
                  aria-label={tool.label}
                  className={`mx-px flex h-8 w-6 items-center justify-center rounded-md border ${
                    g === 0 && i === 0 ? 'border-[#1a2a42] bg-gradient-to-b from-[#1c4a88] to-[#29456b]' : 'border-transparent'
                  }`}
                >
                  <Icon>{tool.icon}</Icon>
                </button>
              ))}
            </div>
          ))}
        </div>

        <DrawingArea />

        <div className="flex w-3 shrink-0 flex-col items-center justify-center gap-0.5 pb-0.5">
          <i className="size-[3px] rounded-full bg-[#ebebeb]" />
          <i className="size-[3px] rounded-full bg-[#ebebeb]" />
          <i className="size-[3px] rounded-full bg-[#ebebeb]" />
        </div>

        <FillAndStroke />

        {/* Commands bar */}
        <div className="flex w-[50px] shrink-0 flex-col items-center pt-[3px] pr-[5px] pl-[9px]">
          {commandGroups.map((group, g) => (
            <div key={g} className="mb-[3px] flex w-9 flex-col items-center border-b border-[#2b2b2b]">
              {group.map((command) => (
                <button key={command.label} aria-label={command.label} className="flex h-[37px] w-9 items-center justify-center">
                  <Icon>{command.icon}</Icon>
                </button>
              ))}
            </div>
          ))}
          <button aria-label="More commands" className="flex h-[34px] w-9 shrink-0 items-center justify-center rounded-md border border-[#1d1d1d] bg-[#333]">
            <Triangle dir="down" />
          </button>
        </div>
      </main>

      <Palette />
      <StatusBar />
    </div>
  );
}
